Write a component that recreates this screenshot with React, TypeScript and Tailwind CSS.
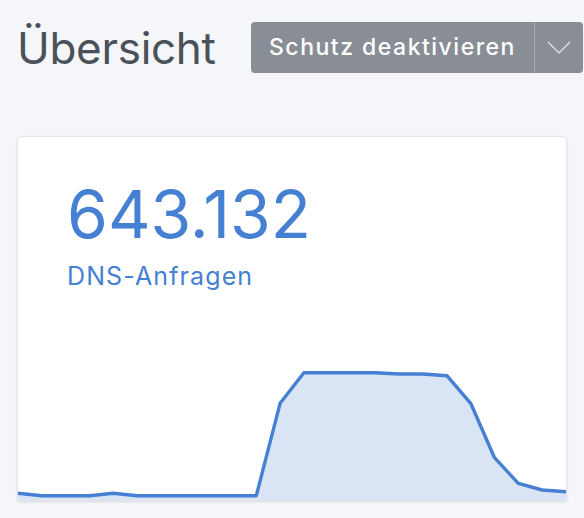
const chartWidth = 548;
const chartHeight = 140;

// Anfragen pro Stunde, schon auf Pixel umgerechnet (y von oben)
const points = [
  133.3, 135.7, 135.7, 135.7, 133.3, 135.7, 135.7, 135.7, 135.7, 135.7, 135.7, 43.3,
  12.7, 12.7, 12.7, 12.7, 14, 14, 15.7, 43.3, 97.7, 123.3, 130, 131.7,
];

function QueryChart() {
  const step = chartWidth / (points.length - 1);
  const line = points.map((y, i) => `${(i * step).toFixed(1)},${y}`).join(' ');
  const area = `0,${chartHeight} ${line} ${chartWidth},${chartHeight}`;

  return (
    <svg width={chartWidth} height={chartHeight} viewBox={`0 0 ${chartWidth} ${chartHeight}`} className="block">
      <polygon points={area} fill="#d9e4f5" />
      <polyline points={line} fill="none" stroke="#4580d3" strokeWidth={3.4} strokeLinejoin="round" />
    </svg>
  );
}

export default function App() {
  return (
    <div className="min-h-screen bg-[#f5f6fa] px-[17px] pt-[22px] font-['Inter',sans-serif]">
      <div className="flex items-center h-[51px] -mr-[16px]">
        <h1 className="text-[44px] font-normal text-[#4b5159] leading-none tracking-[-0.3px]">Übersicht</h1>
        <div className="ml-auto flex h-full w-[332px] rounded-[4px] bg-[#888d96] text-white">
          <button className="flex-1 text-[23px] font-medium tracking-[1.5px] text-left pl-[18px] pb-[1px]">
            Schutz deaktivieren
          </button>
          <div className="w-px bg-[#a3a7ae]" />
          <button className="w-[48px] flex items-center justify-center">
            <svg width="24" height="13" viewBox="0 0 24 13">
              <polyline points="1,1 12,12 23,1" fill="none" stroke="#e9eaed" strokeWidth={1.2} />
            </svg>
          </button>
        </div>
      </div>

      <div className="mt-[63px] h-[365px] flex flex-col rounded-[4px] border border-[#e2e5ea] bg-white shadow-sm overflow-hidden">
        <div className="pl-[49px] pt-[44px] text-[#4680d2]">
          <div className="text-[66px] leading-none">643.132</div>
          <div className="mt-[17px] text-[25px] leading-none tracking-[1.1px]">DNS-Anfragen</div>
        </div>
        <div className="mt-auto">
          <QueryChart />
        </div>
      </div>
    </div>
  );
}
